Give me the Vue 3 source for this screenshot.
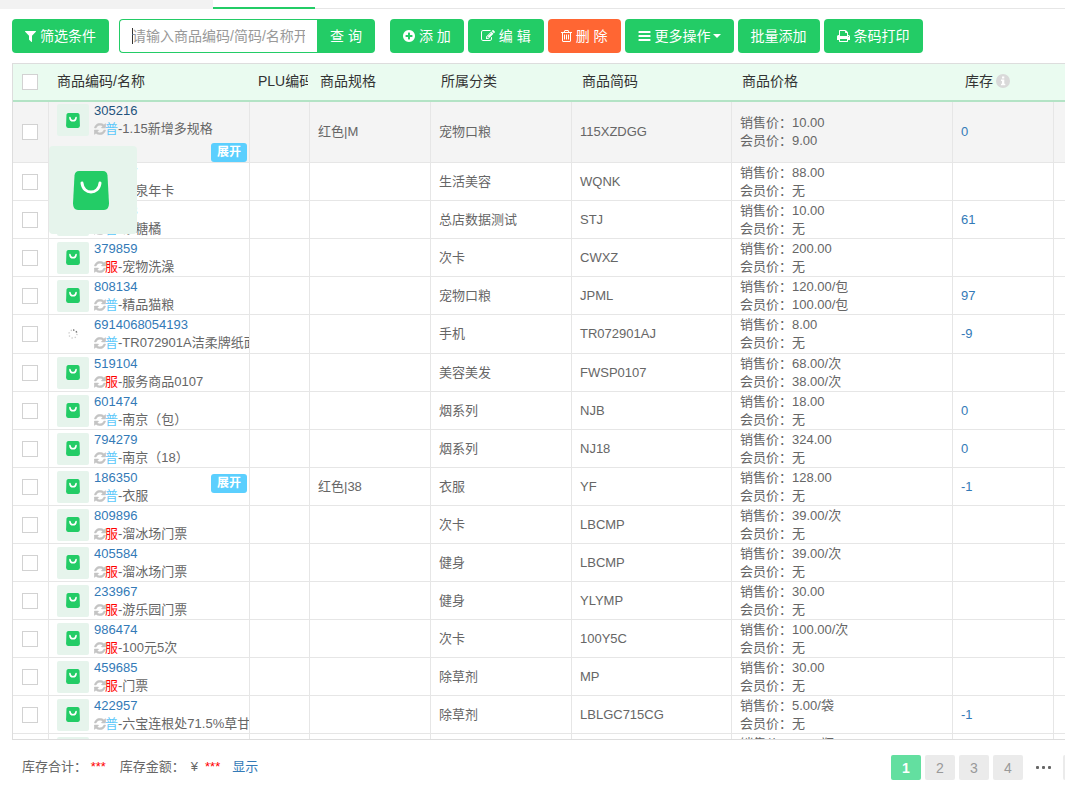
<script setup>
import { ref } from 'vue'

const keyword = ref('')

const icons = {
  filter: {
    box: '0 128 1408 1664',
    d: 'M1403 295q17 41-14 70l-493 493v742q0 42-39 59-13 5-25 5-27 0-45-19l-256-256q-19-19-19-45v-486l-493-493q-31-29-14-70 17-39 59-39h1280q42 0 59 39z',
  },
  plus: {
    box: '0 128 1536 1536',
    d: 'M1216 960v-128q0-26-19-45t-45-19h-256v-256q0-26-19-45t-45-19h-128q-26 0-45 19t-19 45v256h-256q-26 0-45 19t-19 45v128q0 26 19 45t45 19h256v256q0 26 19 45t45 19h128q26 0 45-19t19-45v-256h256q26 0 45-19t19-45zm320-64q0 209-103 385.5t-279.5 279.5-385.5 103-385.5-103-279.5-279.5-103-385.5 103-385.5 279.5-279.5 385.5-103 385.5 103 279.5 279.5 103 385.5z',
  },
  edit: {
    box: '0 128 1792 1536',
    d: 'M888 1184l116-116-152-152-116 116v56h96v96h56zm440-720q-16-16-33 1l-350 350q-17 17-1 33t33-1l350-350q17-17 1-33zm80 594v190q0 119-84.5 203.5t-203.5 84.5h-832q-119 0-203.5-84.5t-84.5-203.5v-832q0-119 84.5-203.5t203.5-84.5h832q63 0 117 25 15 7 18 23 3 17-9 29l-49 49q-14 14-32 8-23-6-45-6h-832q-66 0-113 47t-47 113v832q0 66 47 113t113 47h832q66 0 113-47t47-113v-126q0-13 9-22l64-64q15-15 35-7t20 29zm-96-738l288 288-672 672h-288v-288zm444 132l-92 92-288-288 92-92q28-28 68-28t68 28l152 152q28 28 28 68t-28 68z',
  },
  trash: {
    box: '192 128 1408 1536',
    d: 'M704 736v576q0 14-9 23t-23 9h-64q-14 0-23-9t-9-23v-576q0-14 9-23t23-9h64q14 0 23 9t9 23zm256 0v576q0 14-9 23t-23 9h-64q-14 0-23-9t-9-23v-576q0-14 9-23t23-9h64q14 0 23 9t9 23zm256 0v576q0 14-9 23t-23 9h-64q-14 0-23-9t-9-23v-576q0-14 9-23t23-9h64q14 0 23 9t9 23zm128 724v-948h-896v948q0 22 7 40.5t14.5 27 10.5 8.5h832q3 0 10.5-8.5t14.5-27 7-40.5zm-672-1076h448l-48-117q-7-9-17-11h-317q-10 2-17 11zm928 32v64q0 14-9 23t-23 9h-96v948q0 83-47 143.5t-113 60.5h-832q-66 0-113-58.5t-47-141.5v-952h-96q-14 0-23-9t-9-23v-64q0-14 9-23t23-9h309l70-167q15-37 54-63t79-26h320q40 0 79 26t54 63l70 167h309q14 0 23 9t9 23z',
  },
  bars: {
    box: '0 128 1536 1536',
    d: 'M64 256h1408q64 0 64 64v128q0 64-64 64h-1408q-64 0-64-64v-128q0-64 64-64zM64 768h1408q64 0 64 64v128q0 64-64 64h-1408q-64 0-64-64v-128q0-64 64-64zM64 1280h1408q64 0 64 64v128q0 64-64 64h-1408q-64 0-64-64v-128q0-64 64-64z',
  },
  print: {
    box: '64 128 1664 1536',
    d: 'M448 1536h896v-256h-896v256zm0-640h896v-384h-160q-40 0-68-28t-28-68v-160h-640v640zm1152 64q0-26-19-45t-45-19-45 19-19 45 19 45 45 19 45-19 19-45zm128 0v416q0 13-9.5 22.5t-22.5 9.5h-224v160q0 40-28 68t-68 28h-960q-40 0-68-28t-28-68v-160h-224q-13 0-22.5-9.5t-9.5-22.5v-416q0-79 56.5-135.5t135.5-56.5h64v-544q0-40 28-68t68-28h672q40 0 88 20t76 48l152 152q28 28 48 76t20 88v256h64q79 0 135.5 56.5t56.5 135.5z',
  },
}

const actions = [
  { icon: 'plus', label: '添 加', w: 12 },
  { icon: 'edit', label: '编 辑', w: 14 },
  { icon: 'trash', label: '删 除', w: 11, danger: true },
  { icon: 'bars', label: '更多操作', w: 13, caret: true },
  { label: '批量添加' },
  { icon: 'print', label: '条码打印', w: 13 },
]

const item = (code, type, name, category, short, price, member, stock = '', extra = {}) => ({
  code, type, name, category, short, price, member, stock, ...extra,
})

const rows = [
  item('305216', '普', '1.15新增多规格', '宠物口粮', '115XZDGG', '10.00', '9.00', '0', { spec: '红色|M', expand: true, active: true }),
  item('305207', '服', '温泉年卡', '生活美容', 'WQNK', '88.00', '无'),
  item('305198', '普', '砂糖橘', '总店数据测试', 'STJ', '10.00', '无', '61'),
  item('379859', '服', '宠物洗澡', '次卡', 'CWXZ', '200.00', '无'),
  item('808134', '普', '精品猫粮', '宠物口粮', 'JPML', '120.00/包', '100.00/包', '97'),
  item('6914068054193', '普', 'TR072901A洁柔牌纸面巾', '手机', 'TR072901AJ', '8.00', '无', '-9', { loading: true }),
  item('519104', '服', '服务商品0107', '美容美发', 'FWSP0107', '68.00/次', '38.00/次'),
  item('601474', '普', '南京（包）', '烟系列', 'NJB', '18.00', '无', '0'),
  item('794279', '普', '南京（18）', '烟系列', 'NJ18', '324.00', '无', '0'),
  item('186350', '普', '衣服', '衣服', 'YF', '128.00', '无', '-1', { spec: '红色|38', expand: true }),
  item('809896', '服', '溜冰场门票', '次卡', 'LBCMP', '39.00/次', '无'),
  item('405584', '服', '溜冰场门票', '健身', 'LBCMP', '39.00/次', '无'),
  item('233967', '服', '游乐园门票', '健身', 'YLYMP', '30.00', '无'),
  item('986474', '服', '100元5次', '次卡', '100Y5C', '100.00/次', '无'),
  item('459685', '服', '门票', '除草剂', 'MP', '30.00', '无'),
  item('422957', '普', '六宝连根处71.5%草甘膦', '除草剂', 'LBLGC715CG', '5.00/袋', '无', '-1'),
  item('252783', '普', '矿泉水', '饮料', 'KQS', '2.00/瓶', '无', '0'),
]
</script>

<template>
  <div class="page">
    <div class="tabs">
      <span class="tab-rest"></span>
      <span class="tab-current"></span>
      <span class="tab-line"></span>
    </div>

    <div class="toolbar">
      <button class="btn" type="button">
        <svg class="ico" width="11" height="13" :viewBox="icons.filter.box"><path :d="icons.filter.d" /></svg>筛选条件
      </button>
      <form class="search" @submit.prevent>
        <input v-model="keyword" type="text" aria-label="商品搜索" placeholder="请输入商品编码/简码/名称开头" />
        <button class="btn btn-search" type="submit">查 询</button>
      </form>
      <div class="actions">
        <button v-for="a in actions" :key="a.label" class="btn" :class="{ danger: a.danger }" type="button">
          <svg v-if="a.icon" class="ico" :width="a.w" height="12" :viewBox="icons[a.icon].box"><path :d="icons[a.icon].d" /></svg>{{ a.label }}<i v-if="a.caret" class="caret"></i>
        </button>
      </div>
    </div>

    <div class="grid">
      <table>
        <colgroup>
          <col class="c-check" /><col class="c-name" /><col class="c-plu" /><col class="c-spec" />
          <col class="c-cat" /><col class="c-short" /><col class="c-price" /><col class="c-stock" /><col />
        </colgroup>
        <thead>
          <tr>
            <th class="check"><input type="checkbox" aria-label="全选" /></th>
            <th class="first">商品编码/名称</th>
            <th class="first"><div class="clip">PLU编码</div></th>
            <th>商品规格</th>
            <th>所属分类</th>
            <th>商品简码</th>
            <th>商品价格</th>
            <th>
              <span class="stock-head">库存<svg width="14" height="14" viewBox="0 0 14 14"><circle cx="7" cy="7" r="7" fill="#d9d9d9" /><path fill="#fff" d="M6 2.5h2.3v2H6zM5 5.5h3.3v4.2h1v1.5H5V9.7h1V7H5z" /></svg></span>
            </th>
            <th></th>
          </tr>
        </thead>
        <tbody>
          <tr v-for="r in rows" :key="r.code" :class="{ active: r.active, loading: r.loading }">
            <td class="check"><input type="checkbox" :aria-label="'选择 ' + r.code" /></td>
            <td class="product">
              <div class="goods" :class="{ wrap: r.expand }">
                <span class="thumb" :class="{ blank: r.loading }">
                  <svg v-if="r.loading" width="10" height="10" viewBox="0 0 10 10" fill="none" stroke-width="1.4">
                    <circle cx="5" cy="5" r="4" stroke="#ccc" stroke-dasharray="1.2 2" />
                    <path d="M5 1a4 4 0 0 1 4 4" stroke="#777" stroke-dasharray="1.2 2" />
                  </svg>
                  <svg v-else width="14" height="15" viewBox="0 0 36 39">
                    <path fill="#23cc66" d="M6 0h24q4.500 0 5 4.500l1 28q0 6-5 6.500H5q-5-.5-5-6.500l1-28Q1.500 0 6 0z" />
                    <path fill="none" stroke="#fff" stroke-width="4" stroke-linecap="round" d="M10 12c1 11 15 11 16 0" />
                  </svg>
                </span>
                <div class="text">
                  <a href="#" @click.prevent>{{ r.code }}</a>
                  <div class="name">
                    <svg class="sync" width="12" height="12" viewBox="100 100 1592 1592"><path d="M1639 1056q0 5-1 7-64 268-268 434.500t-478 166.500q-146 0-282.500-55t-243.500-157l-129 129q-19 19-45 19t-45-19-19-45v-448q0-26 19-45t45-19h448q26 0 45 19t19 45-19 45l-137 137q71 66 161 102t187 36q134 0 250-65t186-179q11-17 53-117 8-23 30-23h192q13 0 22.500 9.500t9.500 22.500zm25-800v448q0 26-19 45t-45 19h-448q-26 0-45-19t-19-45 19-45l138-138q-148-137-349-137-134 0-250 65t-186 179q-11 17-53 117-8 23-30 23h-199q-13 0-22.500-9.500t-9.500-22.500v-7q65-268 270-434.500t480-166.500q146 0 284 55.500t245 156.500l130-129q19-19 45-19t45 19 19 45z" /></svg><span :class="r.type === '服' ? 'service' : 'normal'">{{ r.type }}</span>-{{ r.name }}
                  </div>
                </div>
                <button v-if="r.expand" class="expand" type="button">展开</button>
              </div>
              <div v-if="r.active" class="preview">
                <svg width="36" height="39" viewBox="0 0 36 39">
                  <path fill="#23cc66" d="M6 0h24q4 0 4.500 4.500l1.500 28q0 6-5 6.500H5q-5-.5-5-6.500l1.500-28Q2 0 6 0z" />
                  <path fill="none" stroke="#fff" stroke-width="3" stroke-linecap="round" d="M9 12c1 12 17 12 18 0" />
                </svg>
              </div>
            </td>
            <td></td>
            <td>{{ r.spec }}</td>
            <td>{{ r.category }}</td>
            <td>{{ r.short }}</td>
            <td>
              <div>销售价：{{ r.price }}</div>
              <div>会员价：{{ r.member }}</div>
            </td>
            <td><a v-if="r.stock" href="#" @click.prevent>{{ r.stock }}</a></td>
            <td></td>
          </tr>
        </tbody>
      </table>
    </div>

    <div class="footer">
      <div class="totals">
        <span>库存合计： <b>***</b></span>
        <span class="amount">库存金额：<i>¥</i><b>***</b></span>
        <a href="#" @click.prevent>显示</a>
      </div>
      <nav class="pager" aria-label="分页">
        <button class="on" type="button">1</button>
        <button type="button">2</button>
        <button type="button">3</button>
        <button type="button">4</button>
        <span class="dots"><i></i><i></i><i></i></span>
        <button type="button">5</button>
      </nav>
    </div>
  </div>
</template>

<style>
html,
body {
  background: #fff;
  overflow: hidden;
}
</style>

<style scoped>
.page {
  display: flex;
  flex-direction: column;
  height: 100vh;
  font: 13px/18px "Liberation Sans", "Noto Sans CJK SC", sans-serif;
  color: #666;
}
.page *,
.page {
  box-sizing: border-box;
}
button,
input {
  font-family: inherit;
  margin: 0;
}
a {
  color: #337ab7;
  text-decoration: none;
}
.tabs {
  display: flex;
  flex: none;
  height: 9px;
}
.tab-rest {
  width: 20%;
  background: #f2f2f2;
}
.tab-current {
  width: 102px;
  border-bottom: 2px solid #23cc66;
}
.tab-line {
  flex: 1;
  border-bottom: 1px solid #e6e6e6;
}
.toolbar {
  display: flex;
  flex: none;
  padding: 10px 12px;
}
.btn {
  display: inline-flex;
  align-items: center;
  height: 34px;
  padding: 0 13px;
  border: 0;
  border-radius: 4px;
  background: #23cc66;
  color: #fff;
  font-size: 14px;
  line-height: 20px;
  white-space: nowrap;
}
.btn.danger {
  background: #ff6633;
}
.ico {
  flex: none;
  margin-right: 4px;
  fill: #fff;
}
.caret {
  margin-left: 2px;
  border: 4px solid transparent;
  border-top-color: #fff;
  border-bottom: 0;
}
.search {
  display: flex;
  margin: 0 15px 0 10px;
}
.search input {
  width: 198px;
  height: 34px;
  padding: 0 12px;
  border: 1px solid #23cc66;
  border-right: 0;
  border-radius: 4px 0 0 4px;
  outline: 0;
  font-size: 14px;
  background: linear-gradient(#333, #333) 12px center / 1px 16px no-repeat #fff;
}
.search input::placeholder {
  color: #999;
  opacity: 1;
}
.btn-search {
  border-radius: 0 4px 4px 0;
}
.actions {
  display: flex;
  gap: 4px;
}
.grid {
  flex: 1;
  min-height: 0;
  margin-left: 12px;
  border: 1px solid #ddd;
  border-right: 0;
  overflow: hidden;
}
table {
  width: 100%;
  min-width: 1052px;
  table-layout: fixed;
  border-collapse: separate;
  border-spacing: 0;
}
.c-check { width: 36px; }
.c-name { width: 201px; }
.c-plu { width: 60px; }
.c-spec { width: 121px; }
.c-cat { width: 141px; }
.c-short { width: 160px; }
.c-price { width: 221px; }
.c-stock { width: 101px; }
th {
  position: sticky;
  top: 0;
  z-index: 2;
  height: 38px;
  padding: 0 0 2px 10px;
  background: #eafbf0;
  border-bottom: 2px solid #b3e3c5;
  color: #333;
  font-size: 14px;
  font-weight: 400;
  text-align: left;
  white-space: nowrap;
}
th.first {
  padding-left: 8px;
}
.clip {
  margin-right: 2px;
  overflow: hidden;
}
.stock-head {
  display: flex;
  align-items: center;
  gap: 3px;
  padding-left: 2px;
}
td {
  height: 38px;
  padding: 0 0 0 8px;
  border-right: 1px solid #e6e6e6;
  border-bottom: 1px solid #e6e6e6;
  vertical-align: middle;
}
td:last-child {
  border-right: 0;
}
tr.loading td {
  height: 39px;
}
tr.active td {
  background: #f4f4f4;
}
tr.active .text a {
  color: #23527c;
}
td.check,
th.check {
  padding: 0 0 0 9px;
}
.check input {
  appearance: none;
  display: block;
  width: 16px;
  height: 16px;
  border: 1px solid #d2d2d2;
  background: #fff;
}
td.product {
  position: relative;
  padding-right: 0;
}
.goods {
  display: flex;
  align-items: flex-start;
  overflow: hidden;
}
.goods.wrap {
  flex-wrap: wrap;
  padding-right: 2px;
}
.thumb {
  display: flex;
  flex: none;
  align-items: center;
  justify-content: center;
  width: 32px;
  height: 32px;
  margin: 2px 5px 0 0;
  border-radius: 2px;
  background: #e6f4ec;
}
.thumb.blank {
  background: none;
}
.text {
  white-space: nowrap;
}
.text a {
  display: block;
}
.sync {
  margin-right: -1px;
  fill: #c4c4c4;
  stroke: #c4c4c4;
  stroke-width: 60;
  vertical-align: -2px;
}
.normal {
  color: #5bc8fa;
}
.service {
  color: #f00;
}
.expand {
  width: 36px;
  height: 19px;
  margin: 5px 0 0 auto;
  padding: 0;
  border: 0;
  border-radius: 3px;
  background: #5bcffe;
  color: #fff;
  font-size: 12px;
  font-weight: 700;
  line-height: 19px;
}
.preview {
  position: absolute;
  z-index: 1;
  left: 0;
  top: 44px;
  display: flex;
  align-items: center;
  justify-content: center;
  width: 88px;
  height: 88px;
  padding-right: 4px;
  border-radius: 4px;
  background: #e6f4ec;
}
.footer {
  display: flex;
  flex: none;
  align-items: flex-start;
  height: 53px;
  padding: 15px 0 0 22px;
}
.totals {
  display: flex;
  padding-top: 3px;
}
.totals b {
  color: #f00;
  font-weight: 400;
}
.totals i {
  margin: 0 7px 0 6px;
  font-style: normal;
}
.amount {
  margin: 0 12px 0 14px;
}
.pager {
  display: flex;
  gap: 4px;
  width: 174px;
  margin-left: auto;
  overflow: hidden;
}
.pager button {
  flex: none;
  width: 30px;
  height: 25px;
  padding: 0;
  border: 0;
  border-radius: 2px;
  background: #ebebeb;
  color: #999;
  font-size: 14px;
}
.pager .on {
  background: #63dfa0;
  color: #fff;
  font-weight: 700;
}
.dots {
  display: flex;
  flex: none;
  align-items: center;
  justify-content: center;
  gap: 3px;
  width: 32px;
}
.dots i {
  width: 3px;
  height: 3px;
  border-radius: 1px;
  background: #666;
}
</style>
